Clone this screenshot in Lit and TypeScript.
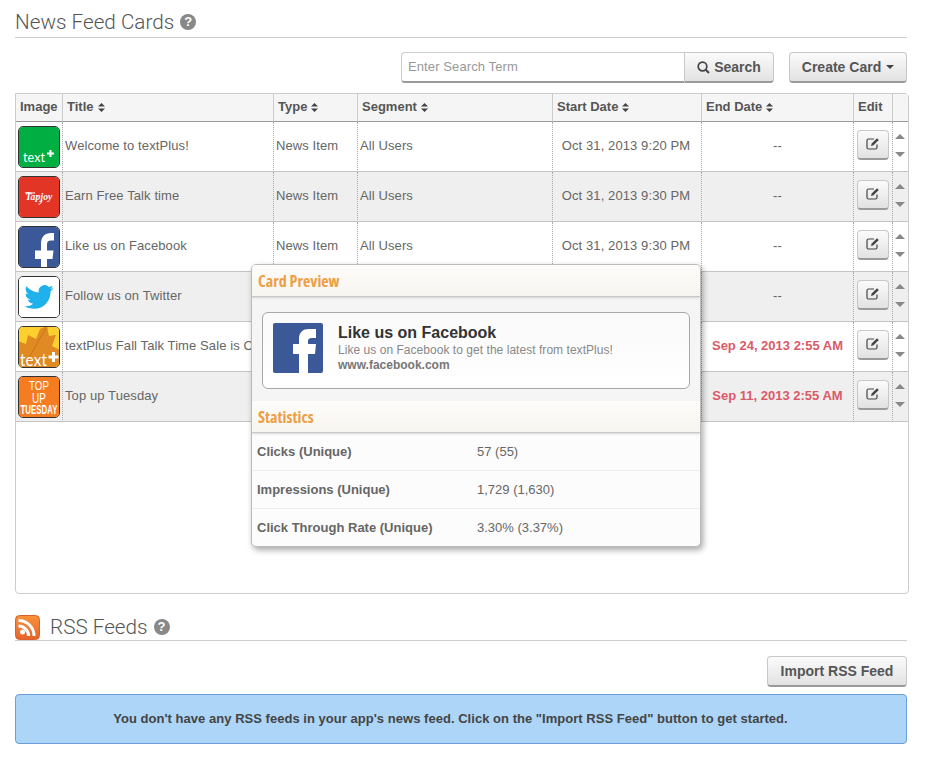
import { LitElement, css, html, svg } from 'lit';
import { customElement } from 'lit/decorators.js';

interface CardRow {
  icon: string;
  title: string;
  // the preview popover hides these on the lower rows
  type?: string;
  segment?: string;
  start?: string;
  end: string;
  expired?: boolean;
}

const rows: CardRow[] = [
  { icon: 'text', title: 'Welcome to textPlus!', type: 'News Item', segment: 'All Users', start: 'Oct 31, 2013 9:20 PM', end: '--' },
  { icon: 'tapjoy', title: 'Earn Free Talk time', type: 'News Item', segment: 'All Users', start: 'Oct 31, 2013 9:30 PM', end: '--' },
  { icon: 'fb', title: 'Like us on Facebook', type: 'News Item', segment: 'All Users', start: 'Oct 31, 2013 9:30 PM', end: '--' },
  { icon: 'twitter', title: 'Follow us on Twitter', end: '--' },
  { icon: 'fall', title: 'textPlus Fall Talk Time Sale is On!', end: 'Sep 24, 2013 2:55 AM', expired: true },
  { icon: 'topup', title: 'Top up Tuesday', end: 'Sep 11, 2013 2:55 AM', expired: true },
];

const stats = [
  ['Clicks (Unique)', '57 (55)'],
  ['Impressions (Unique)', '1,729 (1,630)'],
  ['Click Through Rate (Unique)', '3.30% (3.37%)'],
];

const F_THUMB = 'M23 42V33h-6v-8.500h6V18c0-7.500 4-11 10-11h3v7.500h-3c-3 0-4 1.500-4 4v6h6.500l-1 8.500H29V42z';
const F_CARD = 'M26 50V31h-6V21h6v-5c0-7 4-10 10-10h7v9h-4c-3 0-4 1-4 3.500V21h8l-1 10h-7V50z';
const BIRD_PATH = 'M23.953 4.57a10 10 0 01-2.825.775 4.958 4.958 0 002.163-2.723c-.951.555-2.005.959-3.127 1.184a4.92 4.92 0 00-8.384 4.482C7.69 8.095 4.067 6.13 1.64 3.162a4.822 4.822 0 00-.666 2.475c0 1.71.87 3.213 2.188 4.096a4.904 4.904 0 01-2.228-.616v.06a4.923 4.923 0 003.946 4.827 4.996 4.996 0 01-2.212.085 4.936 4.936 0 004.604 3.417 9.867 9.867 0 01-6.102 2.105c-.39 0-.779-.023-1.17-.067a13.995 13.995 0 007.557 2.209c9.053 0 13.998-7.496 13.998-13.985 0-.21 0-.42-.015-.63A9.935 9.935 0 0024 4.59z';

// thumbnails are all drawn on a 42 box, the border comes from .thumb
function iconArt(name: string) {
  switch (name) {
    case 'text':
      return svg`<rect width="42" height="42" fill="#00ae42"/>
        <text x="5" y="36" font-size="14" fill="#fff" font-family="Lato, sans-serif" textLength="22" lengthAdjust="spacingAndGlyphs">text</text>
        <path d="M31.500 24h2v2.500h2.500v2h-2.500V31h-2v-2.500H29v-2h2.500z" fill="#fff"/>`;
    case 'tapjoy':
      return svg`<rect width="42" height="42" fill="#e23526"/>
        <path d="M7 17c4-1.200 7 .8 10-.3" stroke="#fff" stroke-width="1.200" fill="none"/>
        <text x="21" y="24" text-anchor="middle" font-size="10" font-style="italic" font-weight="700" fill="#fff" font-family="'Liberation Serif', serif" textLength="27" lengthAdjust="spacingAndGlyphs">Tapjoy</text>
        <path d="M24 24c-.5 3-2 4.500-3.500 4" stroke="#fff" stroke-width="1" fill="none"/>`;
    case 'fb':
      return svg`<rect width="42" height="42" fill="#3b5998"/><path d=${F_THUMB} fill="#fff"/>`;
    case 'twitter':
      return svg`<rect width="42" height="42" fill="#fff"/><g transform="translate(6.500 6.500) scale(1.210)"><path d=${BIRD_PATH} fill="#1eb1ec"/></g>`;
    case 'fall':
      return svg`<rect width="42" height="42" fill="#fdd02f"/>
        <path d="M0 42V15l8 3 2-9 8 4 4-10 7-3 2 10 7-1-4 11 8 4V42z" fill="#e08a24"/>
        <path d="M5 42L28 2" stroke="#c9761a" stroke-width="1" fill="none"/>
        <text x="2" y="40" font-size="17" fill="#fff" font-family="Lato, sans-serif" textLength="27" lengthAdjust="spacingAndGlyphs">text</text>
        <path d="M34 26h3v3.500h3.500v3H37V36h-3v-3.500h-3.500v-3H34z" fill="#fff"/>`;
    default:
      return svg`<rect width="42" height="42" fill="#f67c22"/>
        <g fill="#fff" font-family="'Liberation Sans', sans-serif" text-anchor="middle">
          <text x="21" y="14" font-size="13" textLength="20" lengthAdjust="spacingAndGlyphs">TOP</text>
          <text x="21" y="27" font-size="14" textLength="14" lengthAdjust="spacingAndGlyphs">UP</text>
          <text x="21" y="38" font-size="12" font-weight="700" textLength="37" lengthAdjust="spacingAndGlyphs">TUESDAY</text>
        </g>`;
  }
}

@customElement('app-root')
export class AppRoot extends LitElement {
  static override styles = css`
    :host {
      display: block;
      width: 928px;
      height: 762px;
      box-sizing: border-box;
      padding: 0 21px 0 15px;
      background: #fff;
      font-family: 'Liberation Sans', Arial, sans-serif;
      font-size: 13px;
      color: #666;
      overflow: hidden;
    }
    h2 {
      margin: 0;
      display: flex;
      align-items: center;
      gap: 6px;
      padding-top: 7px;
      height: 30px;
      border-bottom: 1px solid #ccc;
      font-family: Roboto, 'Liberation Sans', sans-serif;
      font-size: 20.7px;
      font-weight: 300;
      color: #555;
    }
    .help {
      width: 16px;
      height: 16px;
      border-radius: 50%;
      background: #888;
      color: #fff;
      font-family: 'Liberation Sans', Arial, sans-serif;
      font-size: 13px;
      font-weight: bold;
      line-height: 16px;
      text-align: center;
    }
    .toolbar {
      display: flex;
      justify-content: flex-end;
      margin-top: 14px;
      gap: 15px;
    }
    .search {
      display: flex;
    }
    input {
      width: 283px;
      height: 31px;
      box-sizing: border-box;
      border: 1px solid #ccc;
      border-bottom: 2px solid #999;
      border-right: none;
      border-radius: 4px 0 0 4px;
      padding: 0 6px 2px;
      font: 13px 'Liberation Sans', Arial, sans-serif;
      letter-spacing: 0.1px;
      outline: none;
    }
    input::placeholder {
      color: #999;
    }
    .btn {
      height: 31px;
      box-sizing: border-box;
      display: inline-flex;
      align-items: center;
      justify-content: center;
      gap: 4px;
      border: 1px solid #c8c8c8;
      border-bottom: 2px solid #9a9a9a;
      border-radius: 4px;
      background: linear-gradient(#fbfbfb, #e2e2e2);
      font-family: 'Liberation Sans', Arial, sans-serif;
      font-size: 14px;
      font-weight: bold;
      color: #555;
      padding: 0;
    }
    .search .btn {
      width: 90px;
      border-radius: 0 4px 4px 0;
    }
    .create {
      width: 118px;
      gap: 5px;
    }
    .caret {
      width: 0;
      height: 0;
      border: 4px solid transparent;
      border-top-color: #444;
      border-bottom: none;
    }
    .table-box {
      position: relative;
      margin-top: 10px;
      width: 894px;
      height: 501px;
      box-sizing: border-box;
      border: 1px solid #ccc;
      border-radius: 0 4px 4px 4px;
    }
    table {
      table-layout: fixed;
      width: 892px;
      border-collapse: separate;
      border-spacing: 0;
    }
    th {
      height: 28px;
      box-sizing: border-box;
      padding: 0 0 2px 4px;
      background: #f5f5f5;
      border-right: 1px solid #ccc;
      border-bottom: 1px solid #999;
      text-align: left;
      font-size: 13px;
      color: #555;
      white-space: nowrap;
    }
    th:last-child,
    td:last-child {
      border-right: none;
    }
    td {
      height: 50px;
      box-sizing: border-box;
      padding: 0 0 2px 2px;
      border-right: 1px dotted #aaa;
      border-bottom: 1px solid #c4c4c4;
      white-space: nowrap;
      overflow: hidden;
      letter-spacing: 0.1px;
    }
    tr:nth-child(even) td {
      background: #efefef;
    }
    .sort {
      display: inline-block;
      margin-left: 4px;
      vertical-align: -1px;
    }
    td.thumb-cell {
      padding: 0 0 0 2px;
    }
    .thumb {
      display: block;
      width: 42px;
      height: 42px;
      box-sizing: border-box;
      border: 1px solid #333;
      border-radius: 5px;
      overflow: hidden;
    }
    .thumb svg {
      display: block;
      margin: -1px;
      width: 42px;
      height: 42px;
    }
    td.center {
      text-align: center;
      padding: 0 0 2px;
    }
    td.start {
      padding-right: 2px;
    }
    td.expired {
      color: #da5a68;
      font-weight: bold;
      letter-spacing: 0;
    }
    td.edit-cell {
      padding: 0 0 3px 3px;
    }
    .edit {
      width: 32px;
      height: 30px;
      display: flex;
      padding-bottom: 2px;
    }
    td.move-cell {
      padding: 0 1px 3px 0;
    }
    .move {
      display: flex;
      flex-direction: column;
      align-items: center;
      gap: 13px;
    }
    .up,
    .down {
      width: 0;
      height: 0;
      border-left: 5px solid transparent;
      border-right: 5px solid transparent;
    }
    .up {
      border-bottom: 5px solid #888;
    }
    .down {
      border-top: 5px solid #888;
    }
    .popover {
      position: absolute;
      left: 235px;
      top: 170px;
      width: 450px;
      height: 283px;
      box-sizing: border-box;
      border: 1px solid #bbb;
      border-radius: 5px;
      background: #fcfcfc;
      box-shadow: 2px 3px 6px rgba(0, 0, 0, 0.35);
      overflow: hidden;
    }
    .pop-head {
      height: 32px;
      box-sizing: border-box;
      padding-left: 6px;
      background: linear-gradient(#fdfcfa, #f7f5f0);
      border-bottom: 1px solid #c8c8c8;
      box-shadow: 0 1px 2px rgba(0, 0, 0, 0.15);
      position: relative;
      display: flex;
      align-items: center;
    }
    .pop-head span {
      font-family: 'Open Sans', sans-serif;
      font-stretch: 75%;
      font-size: 16px;
      font-weight: bold;
      color: #ec9f45;
    }
    .preview {
      height: 104px;
      box-sizing: border-box;
      padding: 15px 10px 0;
      background: #f5f5f5;
    }
    .card {
      display: flex;
      gap: 15px;
      height: 77px;
      box-sizing: border-box;
      padding: 10px;
      border: 1px solid #a8a8a8;
      border-radius: 6px;
      background: linear-gradient(#fafafa, #fff);
    }
    .card svg {
      width: 50px;
      height: 50px;
      flex: none;
      border-radius: 2px;
    }
    .card-text {
      display: flex;
      flex-direction: column;
      margin-top: -1px;
    }
    .card-title {
      font-size: 16px;
      font-weight: bold;
      line-height: 21px;
      color: #333;
    }
    .card-desc {
      font-size: 12px;
      line-height: 14px;
      letter-spacing: 0.04px;
      color: #888;
    }
    .card-url {
      margin-top: 1px;
      font-size: 12px;
      font-weight: bold;
      line-height: 15px;
      color: #777;
    }
    .stat {
      display: grid;
      grid-template-columns: 220px 1fr;
      align-items: center;
      height: 38px;
      box-sizing: border-box;
      padding-left: 5px;
      border-bottom: 1px solid #eee;
    }
    .stat:last-child {
      border-bottom: none;
      padding-bottom: 1px;
    }
    .stat b {
      color: #666;
    }
    .rss-head {
      margin-top: 20px;
      padding-top: 0;
      height: 26px;
      gap: 10px;
    }
    .rss-head .help {
      margin-left: -4px;
    }
    .rss-head svg {
      width: 25px;
      height: 25px;
      flex: none;
    }
    .import-row {
      display: flex;
      justify-content: flex-end;
      margin-top: 15px;
    }
    .import {
      width: 140px;
    }
    .alert {
      margin-top: 7px;
      height: 50px;
      box-sizing: border-box;
      display: flex;
      align-items: center;
      justify-content: center;
      padding: 0 21px 2px 0;
      border: 1px solid #6c9ed8;
      border-radius: 4px;
      background: #acd5f8;
      font-weight: bold;
      letter-spacing: 0.03px;
      color: #444;
    }
  `;

  private sortIcon() {
    return html`<svg class="sort" width="7" height="9" viewBox="0 0 7 9"><path d="M3.500 0L7 3.500H0zM3.500 9L0 5.500h7z" fill="#444"/></svg>`;
  }

  private editIcon() {
    return html`<svg width="14" height="13" viewBox="0 0 14 13" fill="none">
      <path d="M11 7.500V10.500a1.500 1.500 0 0 1-1.500 1.500h-7A1.500 1.500 0 0 1 1 10.500v-7A1.500 1.500 0 0 1 2.500 2H8" stroke="#444" stroke-width="1.200"/>
      <path d="M5 9l.7-2.500L11 1.200l1.800 1.800L7.500 8.300z" fill="#444"/>
    </svg>`;
  }

  private renderRow(r: CardRow) {
    return html`<tr>
      <td class="thumb-cell"><span class="thumb"><svg viewBox="0 0 42 42">${iconArt(r.icon)}</svg></span></td>
      <td>${r.title}</td>
      <td>${r.type}</td>
      <td>${r.segment}</td>
      <td class="center start">${r.start}</td>
      <td class="center ${r.expired ? 'expired' : ''}">${r.end}</td>
      <td class="edit-cell"><button class="btn edit">${this.editIcon()}</button></td>
      <td class="move-cell"><div class="move"><span class="up"></span><span class="down"></span></div></td>
    </tr>`;
  }

  override render() {
    return html`
      <h2>News Feed Cards <span class="help">?</span></h2>
      <div class="toolbar">
        <div class="search">
          <input placeholder="Enter Search Term" />
          <button class="btn">
            <svg width="13" height="13" viewBox="0 0 13 13" fill="none">
              <circle cx="5.500" cy="5.500" r="4.300" stroke="#444" stroke-width="1.700"/>
              <path d="M8.700 8.700L12 12" stroke="#444" stroke-width="2"/>
            </svg>
            Search
          </button>
        </div>
        <button class="btn create">Create Card <span class="caret"></span></button>
      </div>
      <div class="table-box">
        <table>
          <colgroup>
            <col style="width:47px" /><col style="width:211px" /><col style="width:84px" /><col style="width:195px" />
            <col style="width:149px" /><col style="width:152px" /><col style="width:39px" /><col style="width:15px" />
          </colgroup>
          <thead>
            <tr>
              <th>Image</th>
              <th>Title${this.sortIcon()}</th>
              <th>Type${this.sortIcon()}</th>
              <th>Segment${this.sortIcon()}</th>
              <th>Start Date${this.sortIcon()}</th>
              <th>End Date${this.sortIcon()}</th>
              <th>Edit</th>
              <th></th>
            </tr>
          </thead>
          <tbody>${rows.map((r) => this.renderRow(r))}</tbody>
        </table>
        <div class="popover">
          <div class="pop-head"><span>Card Preview</span></div>
          <div class="preview">
            <div class="card">
              <svg viewBox="0 0 50 50"><rect width="50" height="50" fill="#3b5998"/><path d=${F_CARD} fill="#fff"/></svg>
              <div class="card-text">
                <span class="card-title">Like us on Facebook</span>
                <span class="card-desc">Like us on Facebook to get the latest from textPlus!</span>
                <span class="card-url">www.facebook.com</span>
              </div>
            </div>
          </div>
          <div class="pop-head"><span>Statistics</span></div>
          ${stats.map(([label, value]) => html`<div class="stat"><b>${label}</b><span>${value}</span></div>`)}
        </div>
      </div>
      <h2 class="rss-head">
        <svg viewBox="0 0 25 25">
          <defs>
            <linearGradient id="rss" x1="0" y1="0" x2="0" y2="1">
              <stop offset="0" stop-color="#f8923a"/><stop offset="1" stop-color="#e8622a"/>
            </linearGradient>
          </defs>
          <rect x="0.500" y="0.500" width="24" height="24" rx="4" fill="url(#rss)" stroke="#d9622c"/>
          <circle cx="7.500" cy="17" r="2.500" fill="#fff"/>
          <path d="M3.500 11a10 10 0 0 1 10 10M3.500 5.500a15.500 15.500 0 0 1 15.500 15.500" stroke="#fff" stroke-width="3" fill="none"/>
        </svg>
        RSS Feeds <span class="help">?</span>
      </h2>
      <div class="import-row"><button class="btn import">Import RSS Feed</button></div>
      <div class="alert">You don't have any RSS feeds in your app's news feed. Click on the "Import RSS Feed" button to get started.</div>
    `;
  }
}
